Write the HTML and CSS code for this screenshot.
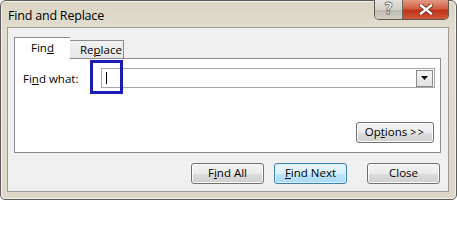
FILE: index.html
```
<!DOCTYPE html>
<html>
<head>
<meta charset="utf-8">
<link rel="stylesheet" href="styles.css">
</head>
<body>
<div class="window">
  <div class="titlebar">
    <div class="title">Find and Replace</div>
    <div class="caption">
      <div class="cap-help">?</div>
      <div class="cap-close">
        <svg width="14" height="11" viewBox="0 0 14 11"><path d="M2 1.5 L12 9.5 M12 1.5 L2 9.5" stroke="#6a2a1e" stroke-width="4.2" stroke-linecap="square"/><path d="M2 1.5 L12 9.5 M12 1.5 L2 9.5" stroke="#ffffff" stroke-width="2.4" stroke-linecap="square"/></svg>
      </div>
    </div>
  </div>
  <div class="client">
    <div class="tabs">
      <div class="tab active">Fin<u>d</u></div>
      <div class="tab">Re<u>p</u>lace</div>
    </div>
    <div class="panel">
      <div class="row">
        <span class="label">Fi<u>n</u>d what:</span>
        <div class="combo">
          <span class="caret"></span>
          <span class="drop"><svg width="7" height="4" viewBox="0 0 7 4"><path d="M0 0 H7 L3.5 4 Z" fill="#000"/></svg></span>
        </div>
        <div class="highlight"></div>
      </div>
      <div class="opts-row">
        <div class="btn opts">Op<u>t</u>ions <span class="gt">&gt;&gt;</span></div>
      </div>
    </div>
    <div class="buttons">
      <div class="btn">F<u>i</u>nd All</div>
      <div class="btn focus"><u>F</u>ind Next</div>
      <div class="btn close">Close</div>
    </div>
  </div>
</div>
</body>
</html>
```
FILE: styles.css
```
* { box-sizing: border-box; }
html, body { margin: 0; padding: 0; background: #ffffff; }
body {
  width: 457px; height: 200px; overflow: hidden;
  font-family: "Open Sans", "Noto Sans", sans-serif;
  font-size: 11.5px; color: #000;
}
.window {
  width: 457px; height: 200px;
  border: 1px solid #5c5c5c;
  border-radius: 6px 6px 5px 5px;
  background: linear-gradient(#dbd5c4, #e2ddcf 30px, #dcd7c9);
  padding: 0 7px 7px 6px;
  display: flex; flex-direction: column;
  box-shadow: inset 0 0 0 1px #f3f1ea;
}
.titlebar {
  height: 26px;
  display: flex; align-items: flex-start;
}
.title {
  font-size: 12.5px; padding: 6px 0 0 1px; color: #000;
  letter-spacing: -0.2px;
}
.caption {
  margin-left: auto; margin-top: -1px;
  display: flex; height: 20px;
  border: 1px solid #5e5a52; border-top: none;
  border-radius: 0 0 5px 5px; overflow: hidden;
}
.cap-help {
  width: 28px; height: 19px;
  background: linear-gradient(#e4e2da, #d3d0c6 50%, #bdbab0 51%, #cfcdc4);
  border-right: 1px solid #6d6a62;
  color: #fff; font: bold 15px/19px "DejaVu Sans", sans-serif; text-align: center;
  -webkit-text-stroke: 0.8px #6f6f6f;
}
.cap-close {
  width: 45px; height: 19px;
  background: linear-gradient(#e49a86, #d35e44 45%, #bf3418 55%, #d0553a);
  display: flex; align-items: center; justify-content: center;
}
.client {
  flex: 1;
  background: #f0f0f0;
  border: 1px solid #9c9a94;
  padding: 9px 8px 0 6px;
  display: flex; flex-direction: column;
}
.tabs { display: flex; align-items: flex-end; height: 22px; margin-bottom: -1px; position: relative; z-index: 1; }
.tab {
  height: 18px; padding: 0 10px;
  border: 1px solid #898c95; border-bottom: none;
  background: linear-gradient(#f2f2f2, #e6e6e6);
  line-height: 17px;
  margin-left: -1px;
}
.tab.active {
  height: 22px; width: 56px; margin-left: 0;
  background: #fff; text-align: center; line-height: 20px;
  border-right: none;
  position: relative; z-index: 2;
}
.tab:not(.active) { width: 55px; text-align: center; border-bottom: 1px solid #898c95; height: 19px; }
.panel {
  background: #fff;
  border: 1px solid #898c95;
  height: 95px; width: 427px;
  padding: 9px 5px 0 8px;
  display: flex; flex-direction: column;
}
.row { display: flex; align-items: center; position: relative; height: 20px; }
.label { width: 78px; }
.combo {
  width: 334px; height: 20px;
  border: 1px solid #a7a7a7;
  display: flex; align-items: center;
  padding-left: 4px; padding-right: 1px;
}
.caret { width: 1px; height: 12px; background: #000; }
.drop {
  margin-left: auto;
  width: 17px; height: 17px;
  border: 1px solid #8a8a8a;
  background: linear-gradient(#f4f4f4, #e2e2e2);
  display: flex; align-items: center; justify-content: center;
}
.highlight {
  position: absolute; left: 67px; top: -8px;
  width: 33px; height: 34px;
  border: 3px solid #1b1bb6;
}
.opts-row { display: flex; justify-content: flex-end; margin-top: 34px; padding-right: 1px; }
.btn {
  width: 73px; height: 21px;
  border: 1px solid #707070; border-radius: 3px;
  background: linear-gradient(#f3f3f3, #ebebeb 50%, #dddddd 51%, #cfcfcf);
  box-shadow: inset 0 0 0 1px #fcfcfc;
  text-align: center; line-height: 18px;
}
.btn.opts { width: 78px; }
.gt { letter-spacing: 1.5px; font-size: 10.5px; }
.buttons { display: flex; justify-content: flex-end; margin-top: 10px; padding-right: 0; gap: 10px; }
.btn.focus {
  border-color: #3c7fb1;
  background: linear-gradient(#eaf6fd, #d9f0fc 50%, #bee6fd 51%, #a7d9f5);
  box-shadow: inset 0 0 0 1px #dff3fd;
}
.btn.close { margin-left: 10px; }
u { text-decoration-thickness: 1px; text-underline-offset: 1px; }
```
